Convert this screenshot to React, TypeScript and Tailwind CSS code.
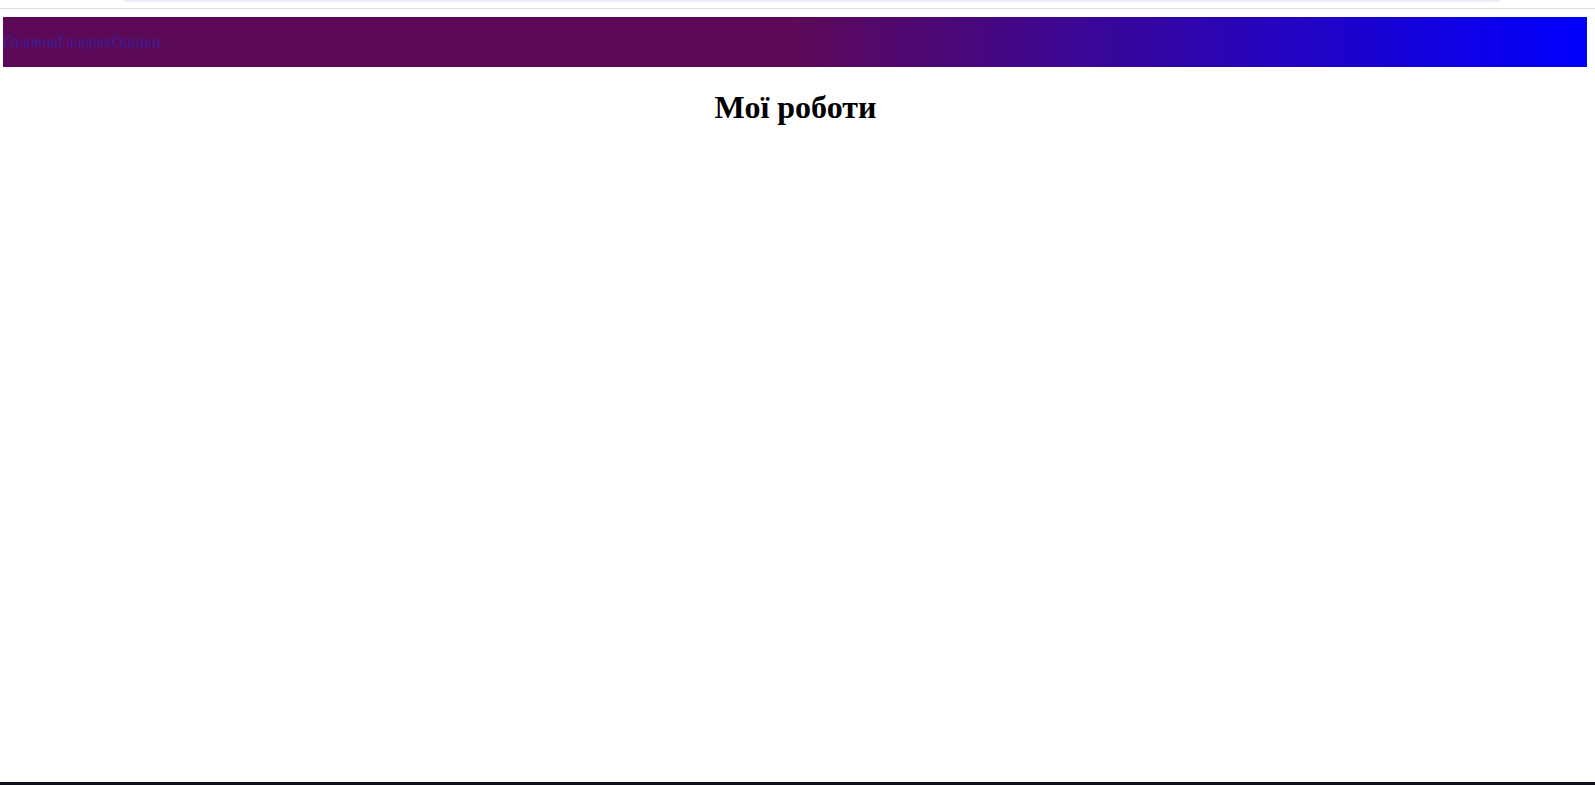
import React from "react";

const links = ["Головна", "Галерея", "Оцінки"];

export default function App() {
  return (
    <div className="min-h-[785px] bg-white font-['Liberation_Serif',serif] flex flex-col">
      {/* top strip */}
      <div className="h-[8px] border-b border-[#e0e0e0] box-content">
        <div className="mx-[123px] w-[1377px] h-[2px] rounded-b-full bg-[#e8ecf6]" />
      </div>

      <div className="px-[3px] pt-[8px] pr-[8px]">
        <nav className="h-[50px] flex items-center bg-[linear-gradient(to_right,#5c0a58_50%,#0000ff)]">
          {links.map((l) => (
            <a key={l} href="#" className="text-[16px] text-[#3c1c96] leading-normal">
              {l}
            </a>
          ))}
        </nav>
      </div>

      <main className="flex-1 pr-[4px]">
        <h1 className="mt-[16px] text-center text-[32px] font-bold text-black leading-normal">
          Мої роботи
        </h1>
      </main>

      <div className="h-[3px] bg-[#0d1117]" />
    </div>
  );
}
